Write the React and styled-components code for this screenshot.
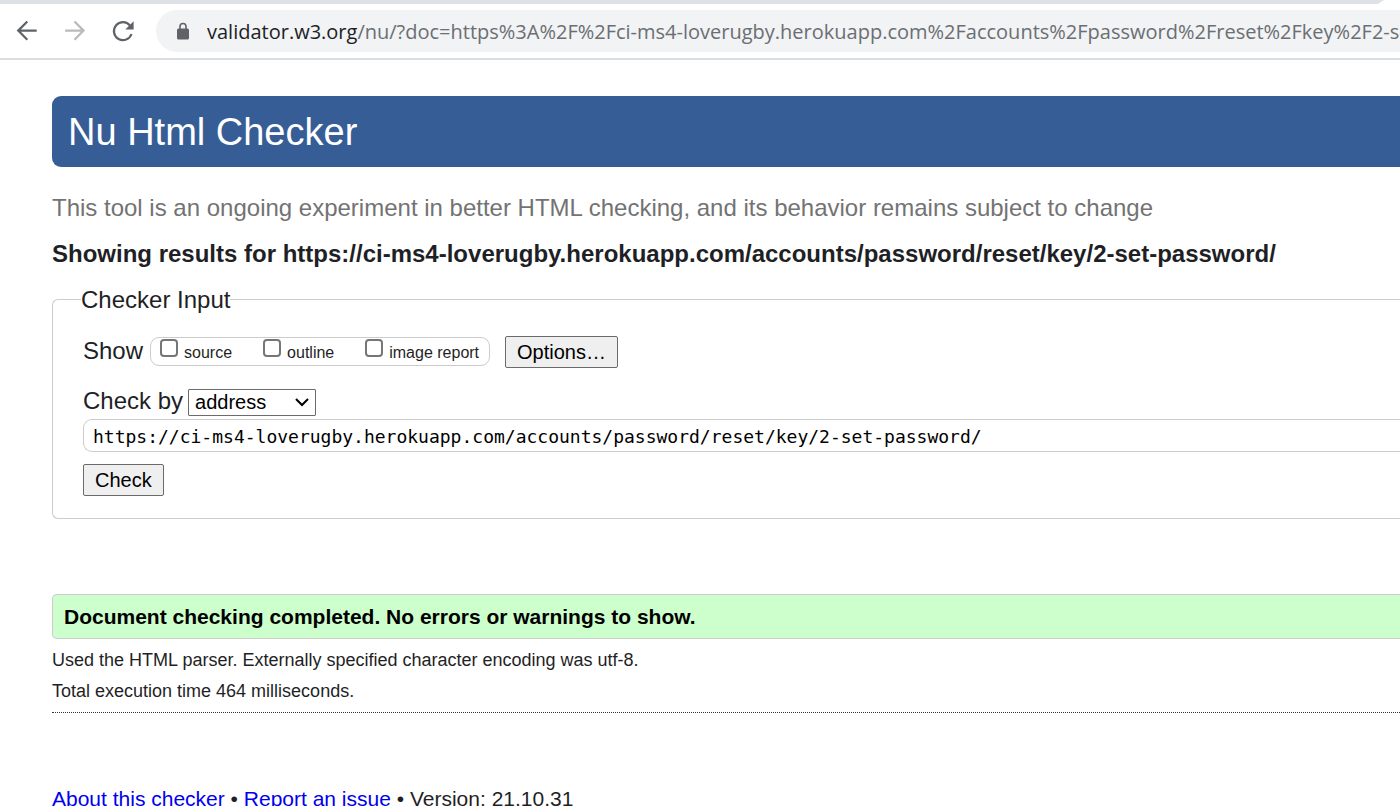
import React from "react";
import styled, { createGlobalStyle } from "styled-components";

const DOC = "https://ci-ms4-loverugby.herokuapp.com/accounts/password/reset/key/2-set-password/";

const GlobalStyle = createGlobalStyle`
  *, *::before, *::after { box-sizing: border-box; }
  html { scrollbar-width: none; }
  body {
    margin: 0;
    background: #fff;
    color: #1f1f26;
    font-family: "Liberation Sans", Arial, sans-serif;
    overflow-x: hidden;
  }
`;

const TabStrip = styled.div`
  height: 4px;
  padding-right: 16px;
`;

const TabStripFill = styled.div`
  height: 4px;
  background: #dee1e6;
  clip-path: polygon(0 0, 100% 0, calc(100% - 6px) 100%, 0 100%);
`;

const Toolbar = styled.nav`
  display: flex;
  align-items: center;
  height: 56px;
  padding-left: 14px;
  border-bottom: 2px solid #dadce0;
`;

const NavButton = styled.button`
  display: flex;
  flex: none;
  width: 26px;
  height: 26px;
  margin-right: 22px;
  padding: 0;
  border: 0;
  background: none;
  color: ${(p) => (p.disabled ? "#bababa" : "#5f6368")};
`;

const AddressBar = styled.div`
  display: flex;
  flex: 1;
  align-items: center;
  gap: 16px;
  min-width: 0;
  height: 42px;
  margin-left: -2px;
  padding-left: 19px;
  border-radius: 21px 0 0 21px;
  background: #f1f3f4;
`;

const Url = styled.div`
  flex: 1;
  min-width: 0;
  padding-top: 2px;
  overflow: hidden;
  white-space: nowrap;
  color: #6b6e73;
  font: 20px/30px "Open Sans", "Segoe UI", sans-serif;
`;

const Host = styled.span`
  color: #202124;
`;

const Page = styled.div`
  padding: 36px 0 0 52px;
`;

const Banner = styled.h1`
  margin: 0;
  padding: 13px 16px 12px;
  border-radius: 9px 0 0 9px;
  background: #365d95;
  color: #fff;
  font-size: 38px;
  font-weight: 400;
  line-height: 46px;
`;

const Intro = styled.p`
  margin: 27px 0 0;
  color: #737373;
  font-size: 24px;
  line-height: 28px;
`;

const ResultsTitle = styled.h2`
  margin: 18px 0 0;
  font-size: 24px;
  line-height: 28px;
`;

const Form = styled.form`
  margin: 18px 0 0;
`;

const InputPanel = styled.fieldset`
  min-width: 0;
  margin: 0;
  padding: 23px 0 22px 30px;
  border: 1px solid #ccc;
  border-right: 0;
  border-radius: 6px 0 0 6px;
`;

const Legend = styled.legend`
  margin-left: -2px;
  padding: 0;
  font-size: 24px;
  line-height: 27px;
`;

const Row = styled.div`
  display: flex;
  align-items: center;
  gap: ${(p) => p.$gap || 0}px;
  margin-top: ${(p) => p.$top || 0}px;
`;

const RowLabel = styled.label`
  padding-bottom: 2px;
  font-size: 24px;
  line-height: 28px;
`;

const CheckGroup = styled.div`
  display: flex;
  gap: 31px;
  height: 29px;
  margin: 0 8px 2px 0;
  padding: 0 10px 0 9px;
  border: 1px solid #ccc;
  border-radius: 9px;
`;

const CheckLabel = styled.label`
  display: flex;
  align-items: flex-start;
  gap: 6px;
  font-size: 16px;
  line-height: 29px;
`;

const CheckBox = styled.input`
  appearance: none;
  width: 18px;
  height: 18px;
  margin: 1px 0 0;
  border: 2px solid #767676;
  border-radius: 4px;
  background: #fff;
`;

const PushButton = styled.button`
  height: 32px;
  padding: 0 11px;
  border: 1px solid #6b6b6b;
  border-radius: 2px;
  background: #efefef;
  color: #000;
  font: 20px/28px "Liberation Sans", Arial, sans-serif;
`;

const SelectWrap = styled.div`
  display: grid;
  align-items: center;
  width: 128px;

  > * { grid-area: 1 / 1; }
  > svg { justify-self: end; margin-right: 7px; pointer-events: none; }
`;

const Select = styled.select`
  appearance: none;
  width: 100%;
  height: 27px;
  padding: 0 6px;
  border: 1px solid #6b6b6b;
  border-radius: 1px;
  background: #fff;
  color: #000;
  font: 20px/24px "Liberation Sans", Arial, sans-serif;
`;

const DocInput = styled.input`
  display: block;
  width: 100%;
  height: 33px;
  margin: 2px 0 12px;
  padding: 2px 0 0 9px;
  border: 1px solid #ccc;
  border-right: 0;
  border-radius: 9px 0 0 9px;
  color: #000;
  font: 18px/28px "DejaVu Sans Mono", Consolas, monospace;
`;

const Success = styled.p`
  margin: 75px 0 0;
  padding: 9px 11px;
  border: 1px solid #ccc;
  border-right: 0;
  border-radius: 5px 0 0 5px;
  background: #cfc;
  color: #000;
  font-size: 21px;
  font-weight: 700;
  line-height: 25px;
`;

const Details = styled.div`
  padding: 6px 0 5px;
  border-bottom: 1px dotted #333;
`;

const Detail = styled.p`
  margin: 0;
  font-size: 18px;
  line-height: 31px;
`;

const Footer = styled.footer`
  margin-top: 74px;
  font-size: 21px;
  line-height: 24px;
`;

const Link = styled.a`
  color: #00e;
  text-decoration: none;
`;

const Icon = ({ children, size = 26 }) => (
  <svg width={size} height={size} viewBox="0 0 26 26" fill="none" stroke="currentColor" strokeWidth="2.2" aria-hidden="true">
    {children}
  </svg>
);

export default function App() {
  return (
    <>
      <GlobalStyle />
      <TabStrip><TabStripFill /></TabStrip>
      <Toolbar>
        <NavButton aria-label="Back">
          <Icon><path d="M22.700 12.600H4.500M13.300 3.500L4.200 12.600l9.100 9.100" /></Icon>
        </NavButton>
        <NavButton aria-label="Forward" disabled>
          <Icon><path d="M3.200 12.600h18M12.500 3.500l9.100 9.100-9.100 9.100" /></Icon>
        </NavButton>
        <NavButton aria-label="Reload">
          <Icon>
            <path d="M20 7.500A9 9 0 1 0 21.500 16" />
            <path d="M23.600 3.300v8.300h-8.300z" fill="currentColor" stroke="none" />
          </Icon>
        </NavButton>
        <AddressBar>
          <svg width="16" height="18" viewBox="0 0 16 18" aria-hidden="true">
            <rect x="2" y="6.500" width="12" height="11" rx="1.500" fill="#5f6368" />
            <path d="M5 8V4.500a3 3 0 0 1 6 0V8" fill="none" stroke="#5f6368" strokeWidth="1.600" />
          </svg>
          <Url>
            <Host>validator.w3.org</Host>
            /nu/?doc=https%3A%2F%2Fci-ms4-loverugby.herokuapp.com%2Faccounts%2Fpassword%2Freset%2Fkey%2F2-set-password%2F
          </Url>
        </AddressBar>
      </Toolbar>
      <Page>
        <Banner>Nu Html Checker</Banner>
        <Intro>This tool is an ongoing experiment in better HTML checking, and its behavior remains subject to change</Intro>
        <ResultsTitle>Showing results for {DOC}</ResultsTitle>
        <Form onSubmit={(e) => e.preventDefault()}>
          <InputPanel>
            <Legend>Checker Input</Legend>
            <Row $gap={7}>
              <RowLabel as="span">Show</RowLabel>
              <CheckGroup>
                {["source", "outline", "image report"].map((name) => (
                  <CheckLabel key={name}>
                    <CheckBox type="checkbox" />
                    {name}
                  </CheckLabel>
                ))}
              </CheckGroup>
              <PushButton type="button">Options…</PushButton>
            </Row>
            <Row $gap={5} $top={19}>
              <RowLabel htmlFor="method">Check by</RowLabel>
              <SelectWrap>
                <Select id="method" defaultValue="address">
                  <option value="address">address</option>
                  <option value="upload">file upload</option>
                  <option value="text">text input</option>
                </Select>
                <svg width="14" height="10" viewBox="0 0 14 10" fill="none" stroke="#000" strokeWidth="2" aria-hidden="true">
                  <path d="M1 2l6 6 6-6" />
                </svg>
              </SelectWrap>
            </Row>
            <DocInput type="text" aria-label="Document address" defaultValue={DOC} spellCheck={false} />
            <PushButton type="submit">Check</PushButton>
          </InputPanel>
        </Form>
        <Success>Document checking completed. No errors or warnings to show.</Success>
        <Details>
          <Detail>Used the HTML parser. Externally specified character encoding was utf-8.</Detail>
          <Detail>Total execution time 464 milliseconds.</Detail>
        </Details>
        <Footer>
          <Link href="#about">About this checker</Link> • <Link href="#issue">Report an issue</Link> • Version: 21.10.31
        </Footer>
      </Page>
    </>
  );
}
